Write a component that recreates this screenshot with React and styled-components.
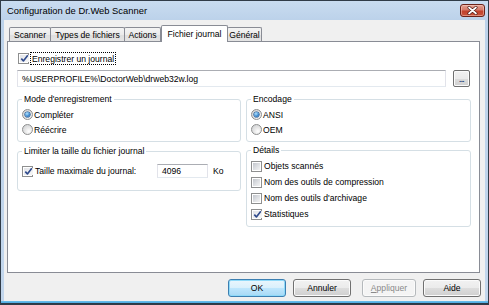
import React from "react";
import styled, { createGlobalStyle } from "styled-components";

const FONT = `"Liberation Sans", Arial, sans-serif`;

const Global = createGlobalStyle`
  html, body { margin: 0; padding: 0; background: #ffffff; }
  body { font-family: ${FONT}; }
  *, *::before, *::after { box-sizing: border-box; }
`;

const Window = styled.div`
  width: 489px;
  height: 305px;
  display: flex;
  flex-direction: column;
  border: 1px solid #313c48;
  padding: 0 3px 3px 3px;
  background:
    linear-gradient(to top, #2c3946 0, #2c3946 1px, #4aa8e0 1px, #6fc0ec 3px, transparent 3px),
    linear-gradient(to bottom, #c9dcf0 0, #bcd2ea 19px, #c2d6ec 100%);
  font: 8.6px/10px ${FONT};
  color: #000;
`;

const TitleBar = styled.div`
  height: 19px;
  display: flex;
  align-items: flex-start;
  justify-content: space-between;
  padding-left: 3px;
`;

const Title = styled.div`
  font: 9.4px/19px ${FONT};
  color: #000;
  padding-top: 0px;
`;

const CloseButton = styled.div`
  width: 25px;
  height: 13px;
  margin-top: 3px;
  border: 1px solid #6b2219;
  border-radius: 3px;
  background: linear-gradient(to bottom, #e3a192 0%, #d57a69 45%, #c2412c 55%, #c9543b 100%);
  box-shadow: inset 0 0 0 1px rgba(255, 220, 210, 0.45);
  display: flex;
  align-items: center;
  justify-content: center;
`;

const Client = styled.div`
  flex: 1;
  display: flex;
  flex-direction: column;
  background: #f0f0f0;
  padding: 5px 4px 4px 3px;
`;

const TabRow = styled.div`
  height: 16px;
  display: flex;
  align-items: flex-end;
  padding-left: 2px;
  position: relative;
  z-index: 1;
`;

const Tab = styled.div`
  width: ${(p) => p.$w}px;
  margin-left: ${(p) => p.$ml}px;
  height: ${(p) => (p.$active ? 17 : 14)}px;
  margin-bottom: ${(p) => (p.$active ? -1 : 0)}px;
  border: 1px solid #898c95;
  border-bottom: none;
  border-radius: 2px 2px 0 0;
  background: ${(p) =>
    p.$active ? "#ffffff" : "linear-gradient(to bottom, #f4f4f4 0%, #ebebeb 50%, #dedede 51%, #e4e4e4 100%)"};
  display: flex;
  align-items: ${(p) => (p.$active ? "flex-start" : "center")};
  justify-content: center;
  padding-top: ${(p) => (p.$active ? 3 : 0)}px;
  white-space: nowrap;
  position: relative;
  z-index: ${(p) => (p.$active ? 2 : 1)};
`;

const Panel = styled.div`
  height: 232px;
  margin-right: 1px;
  border: 1px solid #898c95;
  background: #ffffff;
  padding: 10px 8px 0 9px;
  display: flex;
  flex-direction: column;
`;

const MainCheckRow = styled.div`
  height: 13px;
  display: flex;
  align-items: center;
  padding-left: 1px;
`;

const FocusLabel = styled.span`
  height: 13px;
  display: flex;
  align-items: center;
  padding: 0 1px;
  margin-left: 1px;
  border: 1px dotted #000;
`;

const InputRow = styled.div`
  margin-top: 5px;
  height: 17px;
  display: flex;
  padding-right: 1px;
`;

const TextBox = styled.div`
  flex: ${(p) => (p.$w ? "none" : "1")};
  width: ${(p) => (p.$w ? `${p.$w}px` : "auto")};
  height: ${(p) => p.$h}px;
  border: 1px solid #e2e3ea;
  border-top-color: #abadb3;
  border-bottom-color: #e3e9ef;
  background: #fff;
  padding-left: 4px;
  display: flex;
  align-items: center;
  white-space: nowrap;
`;

const BrowseButton = styled.div`
  width: 17px;
  height: 17px;
  margin-left: 7px;
  border: 1px solid #707070;
  border-radius: 2px;
  background: linear-gradient(to bottom, #f2f2f2 0%, #ebebeb 50%, #dddddd 51%, #cfcfcf 100%);
  box-shadow: inset 0 0 0 1px #fbfbfb;
  display: flex;
  align-items: flex-end;
  justify-content: center;
  padding-bottom: 2px;
  font: bold 8px/8px ${FONT};
  color: #1d3b76;
  letter-spacing: -0.5px;
`;

const GroupGrid = styled.div`
  margin-top: 7px;
  display: grid;
  grid-template-columns: 224px 225px;
  column-gap: 5px;
  align-items: start;
`;

const Column = styled.div`
  display: flex;
  flex-direction: column;
  gap: ${(p) => p.$gap}px;
`;

const Group = styled.fieldset`
  margin: 0;
  min-width: 0;
  border: 1px solid #d5dfe5;
  border-radius: 3px;
  padding: ${(p) => p.$pt}px 4px ${(p) => p.$pb}px 4px;
`;

const Legend = styled.legend`
  padding: 0 2px;
  margin: 0;
  font: 8.6px/10px ${FONT};
  color: #000;
`;

const OptionRow = styled.div`
  height: ${(p) => p.$h}px;
  display: flex;
  align-items: center;
  white-space: nowrap;
`;

const CheckLabel = styled.div`
  width: ${(p) => p.$w}px;
  display: flex;
  align-items: center;
`;

const Unit = styled.span`
  margin-left: 5px;
`;

const CheckBoxOuter = styled.span`
  flex: none;
  width: 11px;
  height: 11px;
  border: 1px solid #8e8f8f;
  background: #ffffff;
  padding: 1px;
  margin-right: ${(p) => p.$mr}px;
  display: inline-flex;
`;

const CheckBoxInner = styled.span`
  flex: 1;
  position: relative;
  background: ${(p) =>
    p.$checked
      ? "linear-gradient(135deg, #e2e4e8 0%, #f7f7f7 100%)"
      : "linear-gradient(135deg, #c2c6cc 0%, #dfe1e4 55%, #f3f3f3 100%)"};
  display: flex;
  align-items: center;
  justify-content: center;
`;

const RadioOuter = styled.span`
  flex: none;
  width: 11px;
  height: 11px;
  border-radius: 50%;
  border: 1px solid #8e8f8f;
  background: radial-gradient(circle at 65% 70%, #ffffff 0%, #e6e6e6 45%, #c9cbce 100%);
  margin-right: 1px;
  display: inline-flex;
  align-items: center;
  justify-content: center;
`;

const RadioDot = styled.span`
  width: 5px;
  height: 5px;
  border-radius: 50%;
  background: radial-gradient(circle at 40% 35%, #b4e4ff 0%, #3d8ad0 55%, #0e4686 100%);
  box-shadow: 0 0 0 0.6px #1d4f8a;
`;

const ButtonRow = styled.div`
  margin-top: 6px;
  height: 18px;
  display: flex;
  justify-content: flex-end;
`;

const DialogButton = styled.div`
  width: ${(p) => p.$w}px;
  margin-left: ${(p) => p.$ml}px;
  height: 18px;
  border-radius: 3px;
  display: flex;
  align-items: center;
  justify-content: center;
  border: 1px solid ${(p) => (p.$default ? "#3c7fb1" : p.$disabled ? "#b5b9bc" : "#707070")};
  background: ${(p) =>
    p.$default
      ? "linear-gradient(to bottom, #eaf6fd 0%, #d9f0fc 50%, #bee6fd 51%, #a7d9f5 100%)"
      : p.$disabled
      ? "#f4f4f4"
      : "linear-gradient(to bottom, #f2f2f2 0%, #ebebeb 50%, #dddddd 51%, #cfcfcf 100%)"};
  box-shadow: inset 0 0 0 1px ${(p) => (p.$default ? "#8fdaf9" : "#fbfbfb")};
  color: ${(p) => (p.$disabled ? "#8a8a8a" : "#000")};
`;

const Mnemonic = styled.span`
  text-decoration: underline;
`;

function CheckBox({ checked, mr = 2 }) {
  return (
    <CheckBoxOuter $mr={mr}>
      <CheckBoxInner $checked={checked}>
        {checked && (
          <svg width="9" height="9" viewBox="0 0 9 9">
            <path d="M1.3 4.6 L3.4 6.9 L7.8 1.2" fill="none" stroke="#2f4a8c" strokeWidth="1.6" strokeLinejoin="round" />
          </svg>
        )}
      </CheckBoxInner>
    </CheckBoxOuter>
  );
}

function Radio({ checked }) {
  return <RadioOuter>{checked && <RadioDot />}</RadioOuter>;
}

const tabs = [
  { label: "Scanner", w: 42, ml: 0 },
  { label: "Types de fichiers", w: 75, ml: -1 },
  { label: "Actions", w: 37, ml: -1 },
  { label: "Fichier journal", w: 67, ml: 0, active: true },
  { label: "Général", w: 35, ml: -1 },
];

const details = [
  { label: "Objets scannés", checked: false },
  { label: "Nom des outils de compression", checked: false },
  { label: "Nom des outils d'archivage", checked: false },
  { label: "Statistiques", checked: true },
];

export default function App() {
  return (
    <>
      <Global />
      <Window>
        <TitleBar>
          <Title>Configuration de Dr.Web Scanner</Title>
          <CloseButton>
            <svg width="11" height="9" viewBox="0 0 11 9">
              <path d="M2 1.5 L9 7.5 M9 1.5 L2 7.5" stroke="#4a1510" strokeWidth="3" strokeLinecap="round" />
              <path d="M2 1.5 L9 7.5 M9 1.5 L2 7.5" stroke="#ffffff" strokeWidth="1.7" strokeLinecap="round" />
            </svg>
          </CloseButton>
        </TitleBar>
        <Client>
          <TabRow>
            {tabs.map((t) => (
              <Tab key={t.label} $w={t.w} $ml={t.ml} $active={t.active}>
                {t.label}
              </Tab>
            ))}
          </TabRow>
          <Panel>
            <MainCheckRow>
              <CheckBox checked mr={0} />
              <FocusLabel>Enregistrer un journal</FocusLabel>
            </MainCheckRow>
            <InputRow>
              <TextBox $h={17}>{"%USERPROFILE%\\DoctorWeb\\drweb32w.log"}</TextBox>
              <BrowseButton>...</BrowseButton>
            </InputRow>
            <GroupGrid>
              <Column $gap={4}>
                <Group $pt={3} $pb={4}>
                  <Legend>Mode d'enregistrement</Legend>
                  <OptionRow $h={15}>
                    <Radio checked />
                    Compléter
                  </OptionRow>
                  <OptionRow $h={15}>
                    <Radio />
                    Réécrire
                  </OptionRow>
                </Group>
                <Group $pt={8} $pb={12}>
                  <Legend>Limiter la taille du fichier journal</Legend>
                  <OptionRow $h={14}>
                    <CheckLabel $w={135}>
                      <CheckBox checked />
                      Taille maximale du journal:
                    </CheckLabel>
                    <TextBox $w={51} $h={14}>4096</TextBox>
                    <Unit>Ko</Unit>
                  </OptionRow>
                </Group>
              </Column>
              <Column $gap={3}>
                <Group $pt={3} $pb={4}>
                  <Legend>Encodage</Legend>
                  <OptionRow $h={15}>
                    <Radio checked />
                    ANSI
                  </OptionRow>
                  <OptionRow $h={15}>
                    <Radio />
                    OEM
                  </OptionRow>
                </Group>
                <Group $pt={3} $pb={4}>
                  <Legend>Détails</Legend>
                  {details.map((d) => (
                    <OptionRow key={d.label} $h={16}>
                      <CheckBox checked={d.checked} />
                      {d.label}
                    </OptionRow>
                  ))}
                </Group>
              </Column>
            </GroupGrid>
          </Panel>
          <ButtonRow>
            <DialogButton $w={58} $ml={0} $default>OK</DialogButton>
            <DialogButton $w={58} $ml={7}>Annuler</DialogButton>
            <DialogButton $w={54} $ml={11} $disabled>
              <Mnemonic>A</Mnemonic>ppliquer
            </DialogButton>
            <DialogButton $w={58} $ml={7}>Aide</DialogButton>
          </ButtonRow>
        </Client>
      </Window>
    </>
  );
}
